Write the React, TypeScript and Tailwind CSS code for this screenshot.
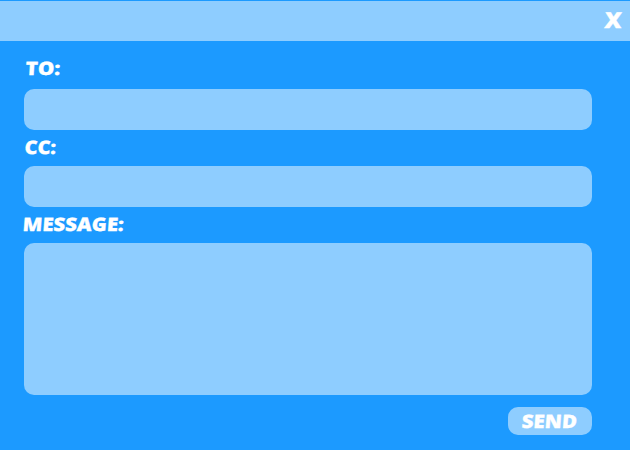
import React from "react";

const fieldStyle = "block w-[568px] rounded-[10px] bg-[#8ecdff] outline-none";
const labelStyle = "block h-5 w-max origin-bottom-left text-[18.5px] leading-5 font-extrabold whitespace-nowrap";

export default function App() {
  return (
    <main className="flex h-[450px] w-[630px] flex-col overflow-hidden bg-[#1c9aff] font-['Open_Sans',sans-serif] text-white [-webkit-text-stroke:0.3px_white]">
      <header className="mt-px flex h-10 shrink-0 items-start justify-end bg-[#8ecdff] pr-2">
        <button aria-label="Close" className="mt-2 origin-right scale-x-108 -skew-x-4 text-[22px] leading-5 font-extrabold">X</button>
      </header>
      <form className="flex flex-col pl-6">
        <label htmlFor="to" className={`${labelStyle} mt-[17px] ml-px -skew-x-3 scale-x-112`}>TO:</label>
        <input id="to" className={`${fieldStyle} mt-[11px] h-[41px]`} />
        <label htmlFor="cc" className={`${labelStyle} mt-[7px] -skew-x-3 scale-x-108`}>CC:</label>
        <input id="cc" className={`${fieldStyle} mt-[9px] h-[41px]`} />
        <label htmlFor="message" className={`${labelStyle} mt-[7px] -ml-[2px] -skew-x-4 scale-x-110`}>MESSAGE:</label>
        <textarea id="message" className={`${fieldStyle} mt-[9px] h-[152px] resize-none`} />
        <button type="button" className="mt-3 ml-[484px] flex h-7 w-[84px] rounded-[10px] bg-[#8ecdff] pt-1 pl-[13px]">
          <span className={`${labelStyle} -skew-x-4 scale-x-111`}>SEND</span>
        </button>
      </form>
    </main>
  );
}
